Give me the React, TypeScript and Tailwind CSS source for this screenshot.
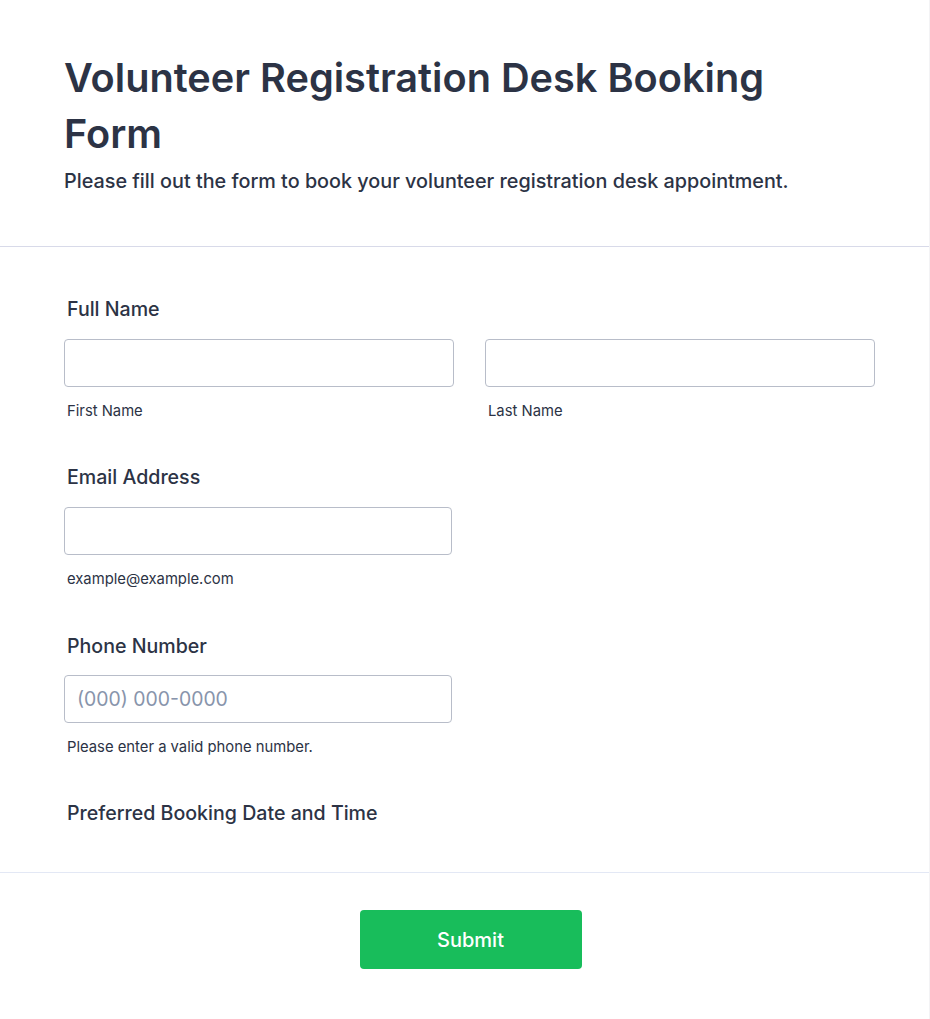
const fieldLabel = "block pl-[3px] text-[19.6px] leading-6 font-medium text-[#2c3345]";
const subLabel = "mt-[14px] block pl-[3px] text-[14.8px] leading-5 text-[#2c3345]";
const inputBox =
  "block h-12 w-full rounded-[4px] border border-[#b8bdc9] bg-white px-3 text-[19.4px] text-[#2c3345] placeholder:text-[#8894ab] outline-none";

const App = () => {
  return (
    <div className="min-h-screen bg-[#f3f3f5] font-['Inter',sans-serif]">
      <div className="w-[929px] min-h-[1019px] bg-white">
        <div className="px-16 pt-[50px] pb-[53px] border-b border-[#d8dae9]">
          <h1 className="w-[760px] text-[39.7px] leading-[56px] font-semibold text-[#2c3345]">
            Volunteer Registration Desk Booking Form
          </h1>
          <p className="mt-[7px] text-[19.8px] leading-6 font-medium text-[#2c3345]">
            Please fill out the form to book your volunteer registration desk appointment.
          </p>
        </div>

        <div className="px-16 pt-[50px] pb-[47px] border-b border-[#e3e8f5]">
          <div>
            <label className={fieldLabel}>Full Name</label>
            <div className="mt-[18px] flex w-[811px] gap-[31px]">
              <div className="flex-1">
                <input className={inputBox} />
                <span className={subLabel}>First Name</span>
              </div>
              <div className="flex-1">
                <input className={inputBox} />
                <span className={subLabel}>Last Name</span>
              </div>
            </div>
          </div>

          <div className="mt-11">
            <label className={fieldLabel}>Email Address</label>
            <div className="mt-[18px] w-[388px]">
              <input className={inputBox} />
              <span className={subLabel}>example@example.com</span>
            </div>
          </div>

          <div className="mt-[45px]">
            <label className={fieldLabel}>Phone Number</label>
            <div className="mt-[17px] w-[388px]">
              <input className={inputBox} placeholder="(000) 000-0000" />
              <span className={subLabel}>Please enter a valid phone number.</span>
            </div>
          </div>

          <div className="mt-11">
            <label className={fieldLabel}>Preferred Booking Date and Time</label>
          </div>
        </div>

        <div className="flex justify-center pt-[37px] pl-[12px]">
          <button className="h-[59px] w-[222px] rounded-[4px] bg-[#18bd5b] text-[20px] font-medium text-white">
            Submit
          </button>
        </div>
      </div>
    </div>
  );
};

export default App;
